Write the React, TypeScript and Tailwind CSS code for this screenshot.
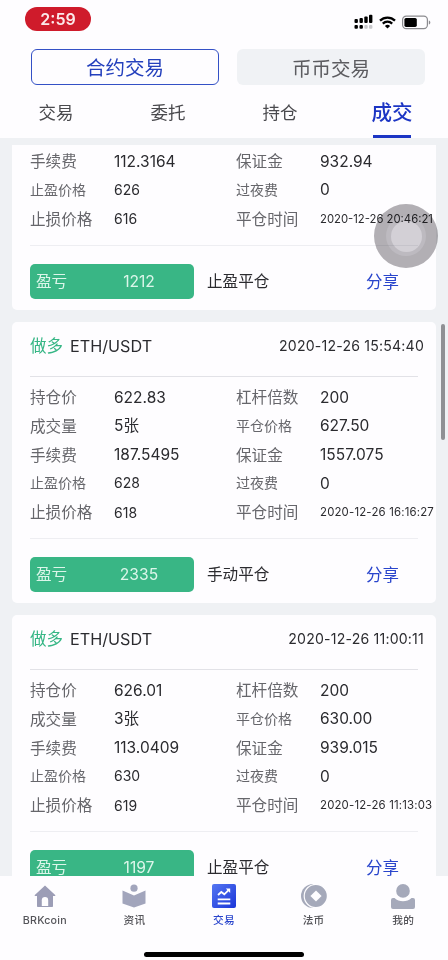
import { clsx } from "clsx";

interface Field {
  label: string;
  value: string;
  labelClass?: string;
  valueClass?: string;
}

interface Trade {
  time?: string;
  left: Field[];
  right: Field[];
  profit: string;
  closeType: string;
}

const small = "pb-[1px] text-[14px]";
const closeTimeClass = "pt-[1px] text-[11.4px] tracking-[0.18px]";

const trades: Trade[] = [
  // scrolled half out of view, so only its last rows are listed
  {
    left: [
      { label: "手续费", value: "112.3164" },
      { label: "止盈价格", value: "626", labelClass: small, valueClass: small },
      { label: "止损价格", value: "616", valueClass: "text-[14px]" },
    ],
    right: [
      { label: "保证金", value: "932.94" },
      { label: "过夜费", value: "0", labelClass: small },
      { label: "平仓时间", value: "2020-12-26 20:46:21", valueClass: "pt-[1px] text-[11.3px]" },
    ],
    profit: "1212",
    closeType: "止盈平仓",
  },
  {
    time: "2020-12-26 15:54:40",
    left: [
      { label: "持仓价", value: "622.83" },
      { label: "成交量", value: "5张" },
      { label: "手续费", value: "187.5495" },
      { label: "止盈价格", value: "628", labelClass: small, valueClass: small },
      { label: "止损价格", value: "618", valueClass: "text-[14px]" },
    ],
    right: [
      { label: "杠杆倍数", value: "200" },
      { label: "平仓价格", value: "627.50", labelClass: small },
      { label: "保证金", value: "1557.075" },
      { label: "过夜费", value: "0", labelClass: small },
      { label: "平仓时间", value: "2020-12-26 16:16:27", valueClass: closeTimeClass },
    ],
    profit: "2335",
    closeType: "手动平仓",
  },
  {
    time: "2020-12-26 11:00:11",
    left: [
      { label: "持仓价", value: "626.01" },
      { label: "成交量", value: "3张" },
      { label: "手续费", value: "113.0409" },
      { label: "止盈价格", value: "630", labelClass: small, valueClass: small },
      { label: "止损价格", value: "619", valueClass: "text-[14px]" },
    ],
    right: [
      { label: "杠杆倍数", value: "200" },
      { label: "平仓价格", value: "630.00", labelClass: small },
      { label: "保证金", value: "939.015" },
      { label: "过夜费", value: "0", labelClass: small },
      { label: "平仓时间", value: "2020-12-26 11:13:03", valueClass: closeTimeClass },
    ],
    profit: "1197",
    closeType: "止盈平仓",
  },
];

function StatusBar() {
  return (
    <div className="flex h-[49px] items-start justify-between pr-[17px] pl-[25px]">
      <span className="mt-[7px] flex h-6 w-[66px] items-center justify-center rounded-full bg-[#cf1b2b] text-[16px] font-semibold text-[#fbe9ea]">
        2:59
      </span>
      <div className="mt-[14px] flex items-center gap-[6px]">
        <svg width="19" height="16" viewBox="0 0 19 16">
          <rect x="0.5" y="5" width="3.4" height="4" rx="1" />
          <rect x="5.5" y="4" width="3.4" height="5" rx="1" />
          <rect x="10.3" y="2.5" width="3.4" height="6.5" rx="1" />
          <rect x="15" y="0.8" width="3.4" height="8.2" rx="1" />
          <rect x="0.5" y="11" width="3.4" height="3.8" rx="1" />
          <rect x="5.5" y="11" width="3.4" height="3.8" rx="1" />
          <rect x="10.3" y="11" width="3.4" height="3.8" rx="1" fill="#c9c9cc" />
          <rect x="15" y="11" width="3.4" height="3.8" rx="1" fill="#c9c9cc" />
        </svg>
        <svg width="17" height="13" viewBox="0 0 17 13" fill="none" stroke="#000" strokeWidth="2.3">
          <path d="M1 4.6A10.8 10.8 0 0 1 16 4.6" />
          <path d="M3.8 7.6A6.8 6.8 0 0 1 13.2 7.6" />
          <path d="M8.5 12.6L5.9 9.9A3.8 3.8 0 0 1 11.1 9.9Z" fill="#000" stroke="none" />
        </svg>
        <svg width="29" height="15" viewBox="0 0 29 15">
          <rect x="0.6" y="1.1" width="24.8" height="12.6" rx="3.6" fill="none" stroke="#8b8b8f" strokeWidth="1.2" />
          <rect x="2.4" y="2.9" width="12.4" height="9" rx="1.6" />
          <path d="M26.8 5.4C28.8 6 28.8 8.8 26.8 9.4Z" fill="#8b8b8f" />
        </svg>
      </div>
    </div>
  );
}

function Header() {
  const tabs = ["交易", "委托", "持仓", "成交"];

  return (
    <header className="h-[138px] shrink-0 bg-[#fefdff]">
      <StatusBar />
      <div className="flex justify-between pr-[23px] pl-[31px] text-[19.5px] leading-8">
        <button className="h-9 w-[188px] rounded-[6px] border border-[#3451c6] pt-[2px] text-[#2440bd]">合约交易</button>
        <button className="h-9 w-[188px] rounded-[6px] bg-[#f0f2f5] pt-[3px] text-[#5c5c60]">币币交易</button>
      </div>
      <nav className="flex h-[53px] text-[17.5px] text-[#4a4a4e]">
        {tabs.map((tab) => (
          <span
            key={tab}
            className={clsx(
              "relative flex w-28 items-center justify-center pt-[3px]",
              tab === "成交" && "text-[20.5px] font-medium text-[#1c35c4]",
            )}
          >
            {tab}
            {tab === "成交" && <i className="absolute bottom-0 h-[3px] w-[38px] bg-[#1c35c4]" />}
          </span>
        ))}
      </nav>
    </header>
  );
}

function FieldColumn({ fields, className }: { fields: Field[]; className: string }) {
  return (
    <dl className={className}>
      {fields.map((field) => (
        <div key={field.label} className="flex h-[28.7px] items-center whitespace-nowrap">
          <dt className={clsx("w-[84px] shrink-0 text-[#66666b]", field.labelClass ?? "pt-[1px] text-[15.6px]")}>
            {field.label}
          </dt>
          <dd className={clsx("text-[#2b2b2f]", field.valueClass ?? "text-[15.5px]")}>{field.value}</dd>
        </div>
      ))}
    </dl>
  );
}

function TradeCard({ trade }: { trade: Trade }) {
  return (
    <article className={clsx("shrink-0 bg-[#fefdff] px-[18px]", trade.time ? "rounded-[5px]" : "rounded-b-[5px]")}>
      {trade.time && (
        <div className="-mr-[6px] flex h-[54px] items-center border-b border-transparent pb-[5px]">
          <span className="pt-[1px] text-[16.5px] text-[#36b685]">做多</span>
          <span className="ml-[7px] text-[16.2px]/5 text-[#2b2b2f]">ETH/USDT</span>
          <time className="ml-auto text-[14.1px]/5 tracking-[0.2px] text-[#2b2b2f]">{trade.time}</time>
        </div>
      )}
      <div
        className={clsx(
          "flex border-b border-b-[#eeeef2]",
          trade.time ? "h-[163px] border-t border-t-[#e2e2e7] pt-[6px]" : "h-[101px] pt-[2px]",
        )}
      >
        <FieldColumn fields={trade.left} className="w-[206px] shrink-0" />
        <FieldColumn fields={trade.right} className="w-[182px]" />
      </div>
      <div className="flex h-16 items-end text-[15.6px]/4">
        <div className="mb-[11px] flex h-[35px] w-[164px] items-center rounded-[5px] bg-[#39b685] pl-[6px] text-[#dcf6ea]">
          <span className="shrink-0 pt-[1px]">盈亏</span>
          <span className="ml-auto w-[110px] text-center">{trade.profit}</span>
        </div>
        <span className="mb-5 ml-[13px] text-[#2b2b2f]">{trade.closeType}</span>
        <a className="mr-[19px] mb-5 ml-auto text-[16.5px]/4 text-[#2945cc]">分享</a>
      </div>
    </article>
  );
}

function HomeIcon() {
  return (
    <svg width="24" height="26" viewBox="0 0 24 26" fill="#9c9db6">
      <path d="M12 1.5L22.2 11Q22.8 12 21.8 12H20V22.2Q20 23 19.2 23H4.8Q4 23 4 22.2V12H2.2Q1.2 12 1.8 11Z" />
      <path d="M8.8 16.2a3.2 3.2 0 0 1 6.4 0V22H8.8z" fill="#fefdff" />
    </svg>
  );
}

function NewsIcon() {
  return (
    <svg width="24" height="26" viewBox="0 0 24 26" fill="#a2a5bc">
      <circle cx="12" cy="4.2" r="3.6" />
      <path d="M0.5 6.5L12 11.5L23.5 6.5V19.5L12 23.5L0.5 19.5Z" />
    </svg>
  );
}

function TradeIcon() {
  return (
    <svg width="24" height="26" viewBox="0 0 24 26">
      <defs>
        <linearGradient id="trade" x1="0" y1="0" x2="1" y2="1">
          <stop offset="0" stopColor="#5577f2" />
          <stop offset="1" stopColor="#1a35d8" />
        </linearGradient>
      </defs>
      <rect width="24" height="24" rx="2" fill="url(#trade)" />
      <path d="M6 11L9.3 8L12.3 10.3L16.8 5.8" fill="none" stroke="#fff" strokeWidth="1.8" />
      <path d="M13.8 4.6H18.2V9Z" fill="#fff" />
      <path d="M5.7 15.3H18.3M5.7 19.5H18.3" stroke="#fff" strokeWidth="1.8" />
    </svg>
  );
}

function CoinIcon() {
  return (
    <svg width="26" height="26" viewBox="0 0 26 26" fill="#a5a9ba">
      <circle cx="12" cy="12" r="12" />
      <circle cx="14.8" cy="12" r="11.6" stroke="#fefdff" strokeWidth="1.2" />
      <path d="M15 6.4L20.6 12L15 17.6L9.4 12Z" fill="#fefdff" />
    </svg>
  );
}

function ProfileIcon() {
  return (
    <svg width="24" height="26" viewBox="0 0 24 26" fill="#a5a9ba">
      <circle cx="12" cy="6.9" r="6.8" />
      <path d="M2 14H3.5C8 18.4 16 18.4 20.5 14H22Q24 14.2 24 16V23Q24 25 22 25H2Q0 25 0 23V16Q0 14.2 2 14Z" />
    </svg>
  );
}

function BottomNav() {
  const items = [
    { label: "BRKcoin", icon: <HomeIcon /> },
    { label: "资讯", icon: <NewsIcon /> },
    { label: "交易", icon: <TradeIcon />, active: true },
    { label: "法币", icon: <CoinIcon /> },
    { label: "我的", icon: <ProfileIcon /> },
  ];

  return (
    <footer className="flex h-[84px] shrink-0 flex-col justify-between bg-[#fefdff] pt-2 pb-[3px]">
      <nav className="flex">
        {items.map((item) => (
          <div
            key={item.label}
            className={clsx(
              "flex flex-1 flex-col items-center text-[10.7px] leading-[18px] font-medium tracking-[0.2px]",
              item.active ? "text-[#2945cc]" : "text-[#55555a]",
            )}
          >
            {item.icon}
            <span className="mt-[2px]">{item.label}</span>
          </div>
        ))}
      </nav>
      <div className="mx-auto h-[5px] w-40 rounded-full bg-black" />
    </footer>
  );
}

export default function App() {
  return (
    <div className="relative flex h-[960px] w-[448px] flex-col overflow-hidden bg-[#eff1f4] font-['Inter','Noto_Sans_CJK_SC',sans-serif]">
      <Header />
      <main className="mt-[7px] flex min-h-0 flex-1 flex-col gap-3 overflow-hidden px-3">
        {trades.map((trade) => (
          <TradeCard key={trade.profit} trade={trade} />
        ))}
      </main>
      <BottomNav />
      <div className="absolute top-[324px] right-[3px] h-[116px] w-1 rounded-full bg-[#8f9094]" />
      {/* Floating assistive button */}
      <div className="absolute top-[204px] left-[374px] flex size-16 items-center justify-center rounded-full bg-[#b3b1b4] mix-blend-multiply">
        <div className="flex size-10 items-center justify-center rounded-full bg-[#bebcc0]">
          <div className="size-[31px] rounded-full bg-[#d4d2d6]" />
        </div>
      </div>
    </div>
  );
}
